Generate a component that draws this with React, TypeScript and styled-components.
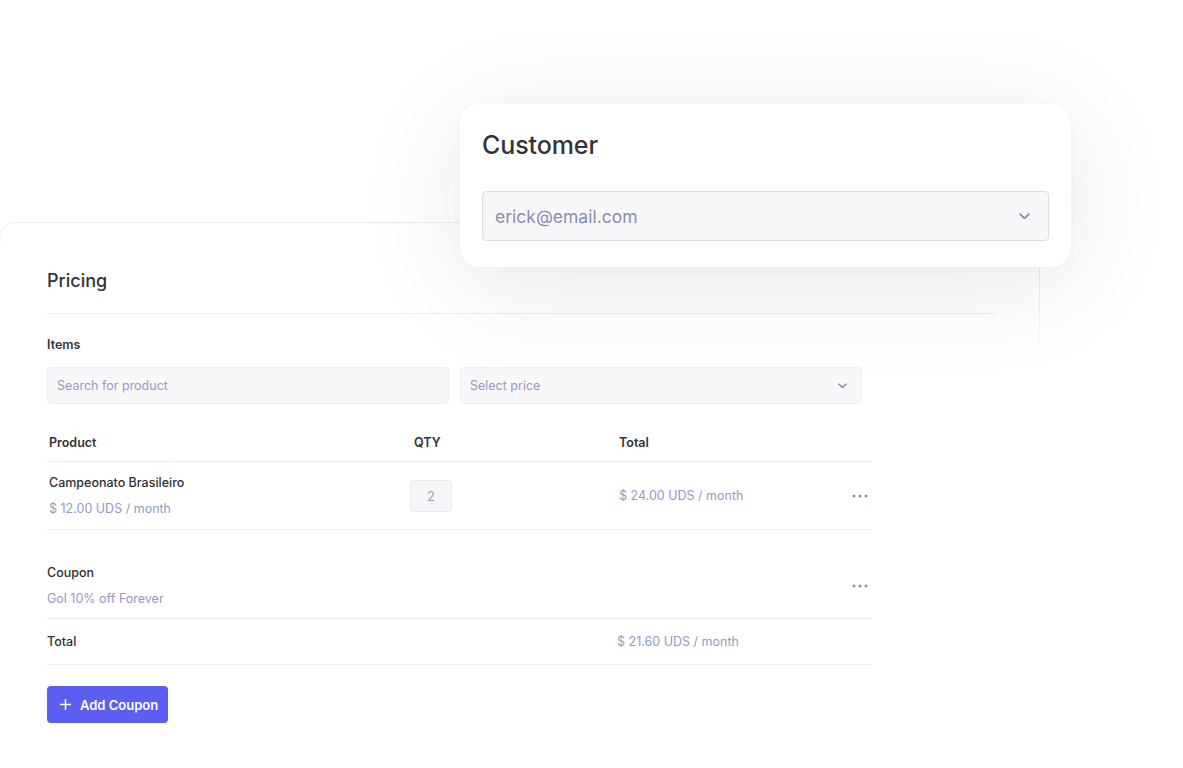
import React from 'react';
import styled, { createGlobalStyle } from 'styled-components';

const GlobalStyle = createGlobalStyle`
  html, body {
    margin: 0;
    padding: 0;
    background: #ffffff;
  }
  body {
    font-family: Inter, "Noto Sans", "Liberation Sans", sans-serif;
    color: #333338;
    -webkit-font-smoothing: antialiased;
  }
`;

const Page = styled.div`
  position: relative;
  width: 1183px;
  height: 768px;
  overflow: hidden;
  background: #ffffff;
`;

const Panel = styled.section`
  position: relative;
  margin-top: 222px;
  width: 1040px;
  padding: 46px 0 0 47px;
  box-sizing: border-box;

  /* faint top edge with rounded corner */
  &::before {
    content: '';
    position: absolute;
    left: 0;
    top: 0;
    right: 0;
    height: 40px;
    border-top: 1px solid #ededf1;
    border-left: 1px solid #ededf1;
    border-radius: 14px 0 0 0;
    pointer-events: none;
    -webkit-mask-image: linear-gradient(to bottom, #000 0, transparent 30px);
    mask-image: linear-gradient(to bottom, #000 0, transparent 30px);
  }

  /* right edge fading out below the customer card */
  &::after {
    content: '';
    position: absolute;
    right: 0;
    top: 0;
    width: 1px;
    height: 140px;
    background: linear-gradient(to bottom, #ececf0 0, #ececf0 50%, rgba(236, 236, 240, 0) 100%);
    pointer-events: none;
  }
`;

const CustomerCard = styled.div`
  position: absolute;
  top: 104px;
  left: 460px;
  width: 611px;
  height: 163px;
  box-sizing: border-box;
  padding: 26px 22px 0 22px;
  background: #ffffff;
  border-radius: 20px;
  box-shadow: 0 16px 110px rgba(20, 20, 40, 0.09), 0 2px 10px rgba(20, 20, 40, 0.03);
  z-index: 2;
`;

const CardTitle = styled.h2`
  margin: 0;
  font-size: 25px;
  font-weight: 500;
  line-height: 30px;
  color: #333336;
  letter-spacing: -0.1px;
`;

const CustomerSelect = styled.div`
  margin-top: 31px;
  height: 50px;
  box-sizing: border-box;
  display: flex;
  align-items: center;
  justify-content: space-between;
  padding: 0 18px 0 12px;
  background: #f7f7f9;
  border: 1.5px solid #dcdce2;
  border-radius: 4px;
  font-size: 17.5px;
  color: #8d8cae;
`;

const SectionTitle = styled.h3`
  margin: 0;
  font-size: 18px;
  font-weight: 500;
  line-height: 26px;
  color: #333336;
`;

const Divider = styled.div`
  margin-top: 19px;
  width: 948px;
  height: 1px;
  background: #eeeef1;
`;

const Label = styled.div`
  margin-top: 23px;
  font-size: 12.5px;
  font-weight: 600;
  line-height: 16px;
  color: #333336;
`;

const InputsRow = styled.div`
  margin-top: 14px;
  display: grid;
  grid-template-columns: 402px 402px;
  gap: 11px;
`;

const Field = styled.div`
  height: 37px;
  box-sizing: border-box;
  display: flex;
  align-items: center;
  justify-content: space-between;
  padding: 0 14px 0 9px;
  background: #f8f8fa;
  border: 1px solid #efeff2;
  border-radius: 4px;
  font-size: 12.5px;
  color: #9a99bd;
`;

const Table = styled.div`
  margin-top: 19px;
  width: 825px;
`;

const Row = styled.div<{ $height: number; $inset?: number }>`
  display: grid;
  grid-template-columns: 361px 209px 1fr auto;
  align-items: center;
  height: ${p => p.$height}px;
  padding-left: ${p => p.$inset ?? 0}px;
  padding-right: 4px;
  box-sizing: border-box;
  border-bottom: 1px solid #eeeef1;
`;

const HeadCell = styled.div<{ $pad?: number }>`
  font-size: 12.5px;
  font-weight: 600;
  color: #333336;
  padding-left: ${p => p.$pad ?? 0}px;
`;

const Stack = styled.div`
  display: flex;
  flex-direction: column;
  gap: 10px;
`;

const Strong = styled.div`
  font-size: 12.5px;
  font-weight: 450;
  line-height: 16px;
  color: #2f2f33;
`;

const Muted = styled.div`
  font-size: 12.5px;
  line-height: 16px;
  color: #9897bf;
`;

const QtyBox = styled.div`
  width: 42px;
  height: 32px;
  box-sizing: border-box;
  display: flex;
  align-items: center;
  justify-content: center;
  background: #f6f6f8;
  border: 1px solid #ededf1;
  border-radius: 4px;
  font-size: 13px;
  color: #9a99bd;
`;

const CouponBlock = styled.div`
  display: grid;
  grid-template-columns: 1fr auto;
  align-items: center;
  padding: 35px 4px 11px 0;
  border-bottom: 1px solid #eeeef1;
`;

const Button = styled.button`
  margin-top: 21px;
  height: 37px;
  width: 121px;
  display: inline-flex;
  align-items: center;
  gap: 9px;
  padding: 0 0 0 13px;
  border: none;
  border-radius: 4px;
  background: #5b5ef0;
  color: #ffffff;
  font-family: inherit;
  font-size: 13px;
  font-weight: 600;
  cursor: pointer;
`;

const Chevron = ({ size = 10, color = '#8988ab' }: { size?: number; color?: string }) => (
  <svg width={size} height={size * 0.6} viewBox="0 0 10 6" fill="none">
    <path d="M1 1l4 4 4-4" stroke={color} strokeWidth="1.6" strokeLinecap="round" strokeLinejoin="round" />
  </svg>
);

const Dots = () => (
  <svg width="16" height="4" viewBox="0 0 16 4">
    <circle cx="2" cy="2" r="1.5" fill="#8c8bb0" />
    <circle cx="8" cy="2" r="1.5" fill="#8c8bb0" />
    <circle cx="14" cy="2" r="1.5" fill="#8c8bb0" />
  </svg>
);

const Plus = () => (
  <svg width="11" height="11" viewBox="0 0 11 11">
    <path d="M5.5 0.5v10M0.5 5.5h10" stroke="#ffffff" strokeWidth="1.5" strokeLinecap="round" />
  </svg>
);

export default function App() {
  return (
    <Page>
      <GlobalStyle />
      <CustomerCard>
        <CardTitle>Customer</CardTitle>
        <CustomerSelect>
          <span>erick@email.com</span>
          <Chevron size={11} />
        </CustomerSelect>
      </CustomerCard>

      <Panel>
        <SectionTitle>Pricing</SectionTitle>
        <Divider />
        <Label>Items</Label>
        <InputsRow>
          <Field>Search for product</Field>
          <Field>
            <span>Select price</span>
            <Chevron size={9} />
          </Field>
        </InputsRow>

        <Table>
          <Row $height={39} $inset={2}>
            <HeadCell>Product</HeadCell>
            <HeadCell $pad={4}>QTY</HeadCell>
            <HeadCell>Total</HeadCell>
            <span />
          </Row>
          <Row $height={68} $inset={2}>
            <Stack>
              <Strong>Campeonato Brasileiro</Strong>
              <Muted>$ 12.00 UDS / month</Muted>
            </Stack>
            <QtyBox>2</QtyBox>
            <Muted>$ 24.00 UDS / month</Muted>
            <Dots />
          </Row>
          <CouponBlock>
            <Stack>
              <Strong>Coupon</Strong>
              <Muted>Gol 10% off Forever</Muted>
            </Stack>
            <Dots />
          </CouponBlock>
          <Row $height={46}>
            <Strong>Total</Strong>
            <span />
            <Muted>$ 21.60 UDS / month</Muted>
            <span />
          </Row>
        </Table>

        <Button>
          <Plus />
          Add Coupon
        </Button>
      </Panel>
    </Page>
  );
}
